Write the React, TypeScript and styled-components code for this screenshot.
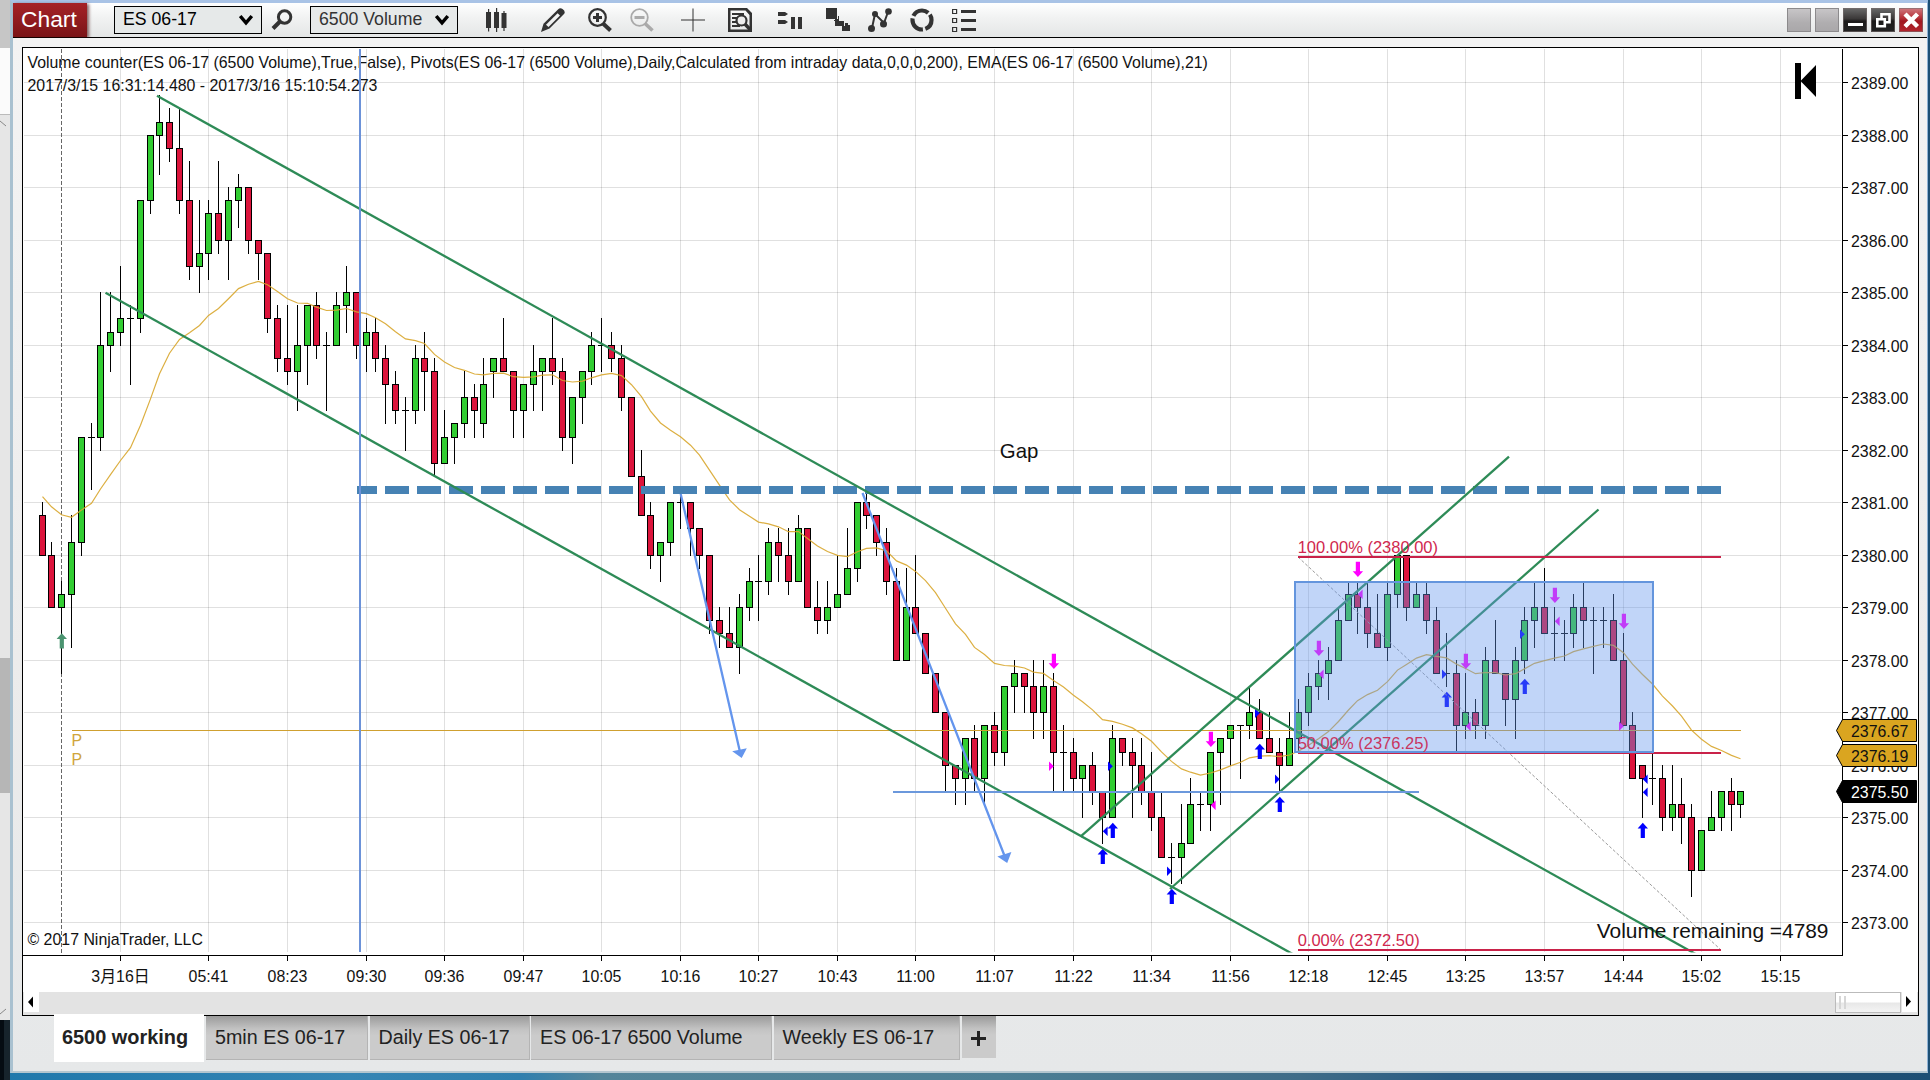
import { FunctionComponent, ReactNode } from "react";
import styled, { createGlobalStyle } from "styled-components";

const GlobalStyle = createGlobalStyle`
  * {
    box-sizing: border-box;
  }
  body {
    margin: 0;
    overflow: hidden;
    font-family: "Liberation Sans", Arial, "Noto Sans CJK SC", sans-serif;
  }
`;

type Candle = [string, number, number, number, number];

// [kind, body top, body bottom, high, low], in quarter points below 2389.00
const candles: Candle[] = [
  ["r", 33, 36, 32, 36], ["r", 36, 40, 35, 40], ["g", 39, 40, 38, 45], ["g", 35, 39, 33, 43],
  ["g", 27, 35, 27, 36], ["d", 27, 27, 26, 31], ["g", 20, 27, 16, 28], ["g", 19, 20, 16, 22],
  ["g", 18, 19, 14, 20], ["d", 18, 18, 17, 23], ["g", 9, 18, 9, 19], ["g", 4, 9, 4, 10],
  ["g", 3, 4, 1, 7], ["r", 3, 5, 2, 6], ["r", 5, 9, 2, 10], ["r", 9, 14, 6, 15],
  ["g", 13, 14, 9, 16], ["g", 10, 13, 9, 15], ["r", 10, 12, 6, 13], ["g", 9, 12, 8, 15],
  ["g", 8, 9, 7, 11], ["r", 8, 12, 8, 13], ["r", 12, 13, 12, 15], ["r", 13, 18, 13, 19],
  ["r", 18, 21, 17, 22], ["r", 21, 22, 17, 23], ["g", 20, 22, 17, 25], ["g", 17, 20, 17, 23],
  ["r", 17, 20, 16, 21], ["d", 20, 20, 19, 25], ["g", 17, 20, 16, 20], ["g", 16, 17, 14, 19],
  ["r", 16, 20, 16, 21], ["g", 19, 20, 18, 22], ["r", 19, 21, 18, 22], ["r", 21, 23, 20, 26],
  ["r", 23, 25, 22, 26], ["d", 25, 25, 24, 28], ["g", 21, 25, 20, 26], ["r", 21, 22, 19, 25],
  ["r", 22, 29, 21, 30], ["g", 27, 29, 25, 29], ["g", 26, 27, 26, 29], ["g", 24, 26, 22, 27],
  ["r", 24, 25, 23, 27], ["g", 23, 26, 21, 27], ["g", 21, 22, 21, 24], ["r", 21, 22, 18, 22],
  ["r", 22, 25, 22, 27], ["g", 23, 25, 23, 27], ["g", 22, 23, 20, 25], ["g", 21, 22, 21, 25],
  ["r", 21, 22, 18, 23], ["r", 22, 27, 21, 28], ["g", 24, 27, 24, 29], ["g", 22, 24, 22, 26],
  ["g", 20, 22, 19, 23], ["d", 20, 20, 18, 22], ["r", 20, 21, 19, 22], ["r", 21, 24, 20, 25],
  ["r", 24, 30, 24, 30], ["r", 30, 33, 28, 33], ["r", 33, 36, 32, 37], ["g", 35, 36, 35, 38],
  ["g", 32, 35, 32, 36], ["d", 32, 32, 31, 34], ["r", 32, 34, 32, 36], ["r", 34, 36, 34, 37],
  ["r", 36, 41, 36, 42], ["r", 41, 42, 40, 43], ["r", 42, 43, 40, 43], ["g", 40, 43, 39, 45],
  ["g", 38, 40, 37, 41], ["d", 38, 38, 36, 41], ["g", 35, 38, 34, 39], ["r", 35, 36, 34, 38],
  ["r", 36, 38, 34, 39], ["g", 34, 38, 33, 38], ["r", 34, 40, 34, 40], ["r", 40, 41, 38, 42],
  ["g", 40, 41, 38, 42], ["g", 39, 40, 36, 40], ["g", 37, 39, 34, 39], ["g", 32, 37, 32, 38],
  ["r", 32, 33, 31, 34], ["r", 33, 35, 33, 36], ["r", 35, 38, 34, 39], ["r", 38, 44, 37, 44],
  ["g", 40, 44, 37, 44], ["r", 40, 42, 36, 42], ["r", 42, 45, 42, 45], ["r", 45, 48, 45, 48],
  ["r", 48, 52, 48, 54], ["r", 52, 53, 52, 55], ["g", 50, 53, 50, 55], ["r", 50, 53, 49, 54],
  ["g", 49, 53, 49, 55], ["r", 49, 51, 48, 52], ["g", 46, 51, 46, 52], ["g", 45, 46, 44, 48],
  ["r", 45, 46, 45, 48], ["r", 46, 48, 44, 50], ["g", 46, 48, 44, 50], ["r", 46, 51, 45, 54],
  ["d", 51, 51, 49, 54], ["r", 51, 53, 50, 54], ["g", 52, 53, 52, 56], ["r", 52, 54, 51, 55],
  ["r", 54, 56, 54, 58], ["g", 50, 56, 49, 56], ["r", 50, 51, 50, 52], ["r", 51, 52, 50, 56],
  ["r", 52, 54, 50, 55], ["r", 54, 56, 51, 57], ["r", 56, 59, 54, 59], ["d", 59, 59, 58, 61],
  ["g", 58, 59, 55, 61], ["g", 55, 58, 53, 58], ["d", 55, 55, 54, 57], ["g", 51, 55, 51, 57],
  ["g", 50, 51, 50, 55], ["g", 49, 50, 49, 52], ["d", 49, 49, 49, 53], ["g", 48, 49, 46, 50],
  ["r", 48, 50, 47, 50], ["r", 50, 51, 48, 51], ["r", 51, 52, 50, 54], ["g", 50, 52, 48, 52],
  ["g", 48, 50, 47, 51], ["g", 46, 48, 45, 49], ["g", 45, 46, 44, 47], ["g", 44, 45, 43, 47],
  ["g", 41, 44, 40, 44], ["g", 39, 41, 38, 41], ["r", 39, 40, 38, 42], ["r", 40, 42, 38, 43],
  ["r", 42, 43, 39, 43], ["g", 39, 43, 38, 44], ["g", 36, 39, 36, 40], ["r", 36, 40, 36, 41],
  ["g", 39, 40, 38, 40], ["r", 39, 41, 38, 42], ["r", 41, 45, 40, 45], ["d", 45, 45, 42, 46],
  ["r", 45, 49, 44, 51], ["g", 48, 49, 45, 50], ["r", 48, 49, 47, 50], ["g", 44, 49, 43, 50],
  ["r", 44, 45, 41, 45], ["r", 45, 47, 45, 49], ["g", 44, 47, 43, 50], ["g", 41, 44, 40, 45],
  ["g", 40, 41, 38, 43], ["r", 40, 42, 37, 42], ["d", 42, 42, 40, 44], ["d", 42, 42, 41, 44],
  ["g", 40, 42, 39, 43], ["r", 40, 41, 38, 43], ["d", 41, 41, 40, 45], ["d", 41, 41, 40, 43],
  ["r", 41, 44, 39, 44], ["r", 44, 49, 42, 49], ["r", 49, 53, 48, 53], ["r", 52, 53, 52, 56],
  ["d", 53, 53, 51, 55], ["r", 53, 56, 52, 57], ["g", 55, 56, 52, 57], ["r", 55, 56, 53, 58],
  ["r", 56, 60, 55, 62], ["g", 57, 60, 57, 60], ["g", 56, 57, 54, 57], ["g", 54, 56, 54, 57],
  ["r", 54, 55, 53, 57], ["g", 54, 55, 54, 56],
];

const timeLabels: [number, string][] = [
  [8, "3月16日"], [17, "05:41"], [25, "08:23"], [33, "09:30"], [41, "09:36"], [49, "09:47"],
  [57, "10:05"], [65, "10:16"], [73, "10:27"], [81, "10:43"], [89, "11:00"], [97, "11:07"],
  [105, "11:22"], [113, "11:34"], [121, "11:56"], [129, "12:18"], [137, "12:45"], [145, "13:25"],
  [153, "13:57"], [161, "14:44"], [169, "15:02"], [177, "15:15"],
];

const buyArrows: [number, number][] = [
  [108, 849], [109, 823], [115, 889], [124, 744], [126, 797], [143, 692], [151, 679], [163, 823],
];
const sellArrows: [number, number][] = [
  [103, 654], [119, 732], [130, 641], [134, 562], [145, 654], [154, 588], [161, 614],
];
const fills: [number, number, "left" | "right", string][] = [
  [103, 766, "right", "#f0f"], [109, 766, "right", "#00f"], [108, 831, "left", "#00f"],
  [115, 871, "right", "#00f"], [119, 805, "left", "#f0f"], [124, 713, "right", "#00f"],
  [126, 779, "right", "#00f"], [130, 674, "left", "#f0f"], [134, 594, "left", "#f0f"],
  [143, 674, "right", "#00f"], [145, 726, "left", "#f0f"], [151, 634, "right", "#00f"],
  [154, 621, "left", "#f0f"], [161, 726, "right", "#f0f"], [163, 779, "left", "#00f"],
  [163, 792, "left", "#00f"],
];

const xAt = (i: number) => Math.floor(42 + 9.82 * i);
const yAt = (t: number) => Math.floor(82.7 + 13.125 * t);

const emaPoints = () => {
  let value = 496.7;
  return candles
    .map(([kind, top, bottom], i) => {
      const close = 82.7 + 13.125 * (kind === "g" ? top : bottom);
      if (i > 0) {
        value += (close - value) / 11;
      }
      return `${xAt(i) + 0.5},${value.toFixed(1)}`;
    })
    .join(" ");
};

const CandleBars = () => (
  <g shapeRendering="crispEdges">
    {candles.map(([kind, top, bottom, high, low], i) => {
      const x = xAt(i);
      const y = yAt(top);
      return (
        <g key={i}>
          <rect x={x} y={yAt(high)} width={1} height={yAt(low) - yAt(high) + 1} />
          {kind === "d" ? (
            <rect x={x - 3} y={y} width={7} height={1} />
          ) : (
            <rect
              x={x - 2.5}
              y={y + 0.5}
              width={6}
              height={yAt(bottom) - y}
              fill={kind === "g" ? "#32cd32" : "#dc143c"}
              stroke="#000"
            />
          )}
        </g>
      );
    })}
  </g>
);

const UpArrow = ({ x, y, color }: { x: number; y: number; color: string }) => (
  <path d={`M${x + 0.8} ${y - 0.3}l5.2 5.8h-3.100v9.500h-4.200v-9.500h-3.100z`} fill={color} />
);

const DownArrow = ({ x, y }: { x: number; y: number }) => (
  <path d={`M${x - 1.2} ${y - 0.2}h4.200v9.500h3.100l-5.200 5.800l-5.200 -5.800h3.100z`} fill="#f0f" />
);

const PriceTag = ({ y, label, dark }: { y: number; label: string; dark?: boolean }) => (
  <g>
    <path
      d={`M1836.5 ${y + 11.5}L1842.5 ${y + 0.5}H1916.5V${y + 22.5}H1842.5Z`}
      fill={dark ? "#000" : "#daa520"}
      stroke="#000"
    />
    <ChartText x={1851} y={y + 17.7} $color={dark ? "#fff" : "#111"}>
      {label}
    </ChartText>
  </g>
);

const ChartCanvas = () => (
  <Canvas viewBox="23 48 1895 944" width={1895} height={944}>
    <clipPath id="plot">
      <rect x={23} y={48} width={1819} height={904.5} />
    </clipPath>

    <g shapeRendering="crispEdges" fill="#000" fillOpacity={0.12}>
      {timeLabels.map(([i]) => (
        <rect key={i} x={xAt(i)} y={49} width={1} height={903} />
      ))}
      {Array.from({ length: 17 }, (_, n) => (
        <rect key={n} x={24} y={yAt(n * 4)} width={1817} height={1} />
      ))}
    </g>
    <path d="M61.5 49V953" stroke="#666" strokeDasharray="4 2" />

    <CandleBars />
    <polyline points={emaPoints()} fill="none" stroke="#d8a62c" strokeWidth={1.2} strokeOpacity={0.9} />
    <path d="M72 730.5H1741" stroke="#cfa030" />
    <ChartText x={71.5} y={745.7} $color="#cfa53c">P</ChartText>
    <ChartText x={71.5} y={765} $color="#cfa53c">P</ChartText>

    <UpArrow x={61} y={633.5} color="#4b9470" />
    {buyArrows.map(([i, y]) => <UpArrow key={i} x={xAt(i)} y={y} color="#00f" />)}
    {sellArrows.map(([i, y]) => <DownArrow key={i} x={xAt(i)} y={y} />)}
    {fills.map(([i, y, side, color], n) => (
      <path
        key={n}
        d={side === "right" ? `M${xAt(i) - 4} ${y - 4.5}l4.8 4.7l-4.8 4.7z` : `M${xAt(i) + 5.6} ${y - 4.5}l-4.8 4.7l4.8 4.7z`}
        fill={color}
      />
    ))}

    <ChartText x={27.5} y={67.7} $size={15.86}>
      Volume counter(ES 06-17 (6500 Volume),True,False), Pivots(ES 06-17 (6500 Volume),Daily,Calculated from intraday data,0,0,0,200), EMA(ES 06-17 (6500 Volume),21)
    </ChartText>
    <ChartText x={27.5} y={90.7}>2017/3/15 16:31:14.480 - 2017/3/16 15:10:54.273</ChartText>
    <ChartText x={27.5} y={944.7}>© 2017 NinjaTrader, LLC</ChartText>

    <path d="M357 490H1721" stroke="#4682b4" strokeWidth={8} strokeDasharray="24 8" strokeDashoffset={4} />

    <g clipPath="url(#plot)" stroke="#2e8b57" strokeWidth={2.3}>
      <path d="M157 95.7L1697 954.8" />
      <path d="M105.5 292.7L1294 954.8" />
      <path d="M1080.5 836.7L1509 456.7" />
      <path d="M1170 889L1598.5 509.5" />
    </g>
    <path d="M360 49V952" stroke="#6c92d8" strokeWidth={2} />
    <path d="M893 792H1419" stroke="#6b98dc" strokeWidth={2} />

    <g fill="#6495ed" stroke="#6495ed">
      <path d="M680.7 494L740 752M862.5 493L1005 857" strokeWidth={2.3} />
      <path d="M732.2 751.3L746.8 748.2L741.7 758Z" stroke="none" />
      <path d="M997.4 856.6L1011.4 852L1007.2 863Z" stroke="none" />
    </g>

    <path d="M1298 557L1721 950" stroke="#999" strokeWidth={1} strokeDasharray="3 2" />
    <g stroke="#c92249" strokeWidth={2}>
      <path d="M1298 557H1721M1298 753H1721M1298 950H1721" />
    </g>
    <rect x={1295} y={582} width={358} height={170} fill="#6495ed" fillOpacity={0.4} stroke="#6495dd" strokeWidth={2} />
    <ChartText x={1297.7} y={553} $size={16.5} $color="#d0284e">100.00% (2380.00)</ChartText>
    <ChartText x={1297.7} y={749} $size={16.5} $color="#c83561">50.00% (2376.25)</ChartText>
    <ChartText x={1297.7} y={945.5} $size={16.5} $color="#d0284e">0.00% (2372.50)</ChartText>

    <ChartText x={999.8} y={457.5} $size={20.4}>Gap</ChartText>
    <ChartText x={1596.8} y={937.5} $size={20.9}>Volume remaining =4789</ChartText>
    <path d="M1795 63h6v17.5l15-15.5v32l-15-15.5V99h-6z" />

    <g shapeRendering="crispEdges">
      <rect x={23} y={955} width={1820} height={1} />
      <rect x={1842} y={49} width={1} height={907} />
      {timeLabels.map(([i]) => (
        <rect key={i} x={xAt(i)} y={956} width={1} height={5} />
      ))}
      {Array.from({ length: 17 }, (_, n) => (
        <rect key={n} x={1843} y={yAt(n * 4)} width={5} height={1} />
      ))}
    </g>
    {timeLabels.map(([i, label]) => (
      <ChartText key={i} x={xAt(i) + 0.5} y={982} textAnchor="middle">{label}</ChartText>
    ))}
    {Array.from({ length: 17 }, (_, n) => (
      <ChartText key={n} x={1851} y={yAt(n * 4) + 6.7}>{`${2389 - n}.00`}</ChartText>
    ))}
    <PriceTag y={719} label="2376.67" />
    <PriceTag y={744} label="2376.19" />
    <PriceTag y={780} label="2375.50" dark />
  </Canvas>
);

const Chevron = () => (
  <svg width="14" height="12" viewBox="0 0 14 12">
    <path d="M1.2 2L7 8.8L12.8 2" fill="none" stroke="#000" strokeWidth="3.4" />
  </svg>
);

interface ToolProps {
  gap?: number;
  color?: string;
  children: ReactNode;
}

const Tool: FunctionComponent<ToolProps> = ({ gap = 18, color = "#333", children }) => (
  <ToolButton $gap={gap}>
    <svg width="24" height="24" viewBox="0 0 24 24" fill={color} stroke="none">
      {children}
    </svg>
  </ToolButton>
);

const Toolbar = () => (
  <ToolbarRow>
    <WindowTitle>Chart</WindowTitle>
    <SelectBox $gap={27}>
      ES 06-17
      <Chevron />
    </SelectBox>
    <SearchIcon width="22" height="22" viewBox="0 0 22 22">
      <circle cx="13.6" cy="8" r="6.2" fill="none" stroke="#333" strokeWidth="3" />
      <path d="M9 12.5L2 19.5" stroke="#333" strokeWidth="4" />
    </SearchIcon>
    <SelectBox $gap={17} $muted>
      6500 Volume
      <Chevron />
    </SelectBox>
    <Tool gap={26}>
      <path d="M2 4h5v16H2zM10 4h5v16h-5zM17.500 5h5v15h-5zM4 1h1.200v22.500H4zM12 0h1.200v24H12zM19.400 3h1.200v20h-1.200z" />
    </Tool>
    <Tool gap={33}>
      <path fillRule="evenodd" d="M17 1.500Q19 -.5 21.500 1Q25 3.500 23 6L8.500 20.500L0 24L2.500 15.800zM5 16.800L7.500 19L19 7.600L16.600 5.200z" />
    </Tool>
    <Tool gap={23}>
      <circle cx="9.500" cy="9.500" r="8.300" fill="none" stroke="#333" strokeWidth="2.200" />
      <path d="M8 5h3v3h3v3h-3v3H8v-3H5V8h3z" />
      <path d="M15 15.500L22.500 22.500" stroke="#333" strokeWidth="4" />
    </Tool>
    <Tool color="#aaa">
      <circle cx="9.500" cy="9.500" r="8.300" fill="none" stroke="#aaa" strokeWidth="1.800" />
      <path d="M4.500 8h10v3h-10z" />
      <path d="M15 15.500L22.500 22.500" stroke="#aaa" strokeWidth="3.600" />
    </Tool>
    <Tool gap={27}>
      <path d="M11.500 0.500h1v23h-1zM0 11.500h24v1H0z" />
    </Tool>
    <Tool gap={23}>
      <path fillRule="evenodd" d="M0 0h19l5 5v19H0zM2.500 2.500v19h19V7l-4-4.500z" />
      <path d="M4 5h12v2H4zM4 9h6v2H4zM4 13h4v2H4zM4 17h8v2H4z" />
      <circle cx="13.500" cy="12.500" r="5" fill="#eee" stroke="#333" strokeWidth="2.200" />
      <path d="M17 16L23 22.500" stroke="#333" strokeWidth="3.500" />
    </Tool>
    <Tool gap={26}>
      <path d="M0 4h7l3 2l-3 2H0zM0 12h7l3 2l-3 2H0zM13 9h4v12h-4zM20 9h4v12h-4z" />
    </Tool>
    <Tool gap={24}>
      <path d="M0 0h11v11H0zM13 8v5h5v5H9v-5h-1v-1h1V11h3V8zM20 15h-1v3h-3v5h8v-6h-2v-2z" />
    </Tool>
    <Tool>
      <path d="M4 20L7 6L16 15L20 4" fill="none" stroke="#333" strokeWidth="2" />
      <circle cx="3.500" cy="20.500" r="3.500" />
      <circle cx="7" cy="6" r="3" />
      <circle cx="15.500" cy="16" r="3.500" />
      <circle cx="20.500" cy="3.500" r="3.300" />
    </Tool>
    <Tool>
      <circle cx="12" cy="12" r="9.500" fill="none" stroke="#333" strokeWidth="4.200" strokeDasharray="17.400 2.500" strokeDashoffset="6" />
    </Tool>
    <Tool>
      <path d="M9 2h15v3H9zM9 11h15v3H9zM9 20h15v3H9z" />
      <path d="M.6 1.500h4v4h-4zM.6 10.500h4v4h-4zM.6 19.500h4v4h-4z" fill="none" stroke="#333" strokeWidth="1.200" />
    </Tool>
    <WindowButtons>
      <WindowButton $tone="grey" />
      <WindowButton $tone="grey" />
      <WindowButton $tone="dark">
        <svg width="24" height="24"><path d="M5 15h15v3H5z" fill="#fff" /></svg>
      </WindowButton>
      <WindowButton $tone="dark">
        <svg width="24" height="24" fill="none" stroke="#fff" strokeWidth="2.600">
          <path d="M10.500 10V6.300h8v8H15" />
          <path d="M6.300 11.300h7.500v7H6.300z" />
        </svg>
      </WindowButton>
      <WindowButton $tone="red">
        <svg width="24" height="24"><path d="M6 6L18.500 18.500M18.500 6L6 18.500" stroke="#fff" strokeWidth="4.400" /></svg>
      </WindowButton>
    </WindowButtons>
  </ToolbarRow>
);

const tabs = [
  { label: "5min ES 06-17", width: 162 },
  { label: "Daily ES 06-17", width: 160 },
  { label: "ES 06-17 6500 Volume", width: 241 },
  { label: "Weekly ES 06-17", width: 186 },
];

const App = () => (
  <>
    <GlobalStyle />
    <Desktop>
      <BackWindow>
        <BackTitle />
        <BackHead />
        <BackBody>
          <BackCaret>
            <svg width="7" height="7"><path d="M0 1L6 6" fill="none" stroke="#888" /></svg>
          </BackCaret>
          <BackThumb />
          <BackCaret>
            <svg width="7" height="7"><path d="M0 6L6 1" fill="none" stroke="#888" /></svg>
          </BackCaret>
        </BackBody>
        <BackFoot />
      </BackWindow>
      <ChartWindow>
        <Toolbar />
        <WindowBody>
          <ChartFrame>
            <ChartCanvas />
            <ScrollBar>
              <ScrollArrow>
                <svg width="15" height="20"><path d="M4 10l5-5.500v11z" /></svg>
              </ScrollArrow>
              <ScrollThumb>
                <Grip />
                <Grip />
              </ScrollThumb>
              <ScrollArrow>
                <svg width="15" height="20"><path d="M9 9.500l-5-5.500v11z" /></svg>
              </ScrollArrow>
            </ScrollBar>
          </ChartFrame>
          <TabBar>
            <ActiveTab>6500 working</ActiveTab>
            {tabs.map((tab) => (
              <Tab key={tab.label} $width={tab.width}>{tab.label}</Tab>
            ))}
            <AddTab>
              <svg width="15" height="15"><path d="M0 6h6V0h3v6h6v3H9v6H6V9H0z" fill="#222" /></svg>
            </AddTab>
          </TabBar>
        </WindowBody>
      </ChartWindow>
    </Desktop>
  </>
);

export default App;

const Desktop = styled.div`
  display: flex;
  width: 1930px;
  height: 1080px;
  overflow: hidden;
  background: linear-gradient(90deg, #1f78ab 0, #3585b4 350px, #2f7fae 520px, #54859a 600px, #4d7f95 1000px, #3f6c88 1300px, #2a5c83 1450px, #1d4f74 1930px);
`;

const BackWindow = styled.div`
  display: flex;
  flex-direction: column;
  width: 10px;
  height: 1080px;
`;

const BackTitle = styled.div`
  height: 48px;
  background: #c6c6c6;
`;

const BackHead = styled.div`
  height: 67px;
  background: #fbfbfb;
  border-bottom: 1px solid #bbb;
`;

const BackBody = styled.div`
  display: flex;
  flex-direction: column;
  justify-content: space-between;
  height: 905px;
  background: #e6e6e6;
`;

const BackCaret = styled.div`
  height: 17px;
  padding-top: 5px;
  line-height: 0;
`;

const BackThumb = styled.div`
  height: 135px;
  margin-top: 315px;
  background: #b6b6b6;
`;

const BackFoot = styled.div`
  flex: 1;
  background: #050c12;
  border-right: 6px solid #17242c;
`;

const ChartWindow = styled.div`
  display: flex;
  flex-direction: column;
  width: 1918px;
  height: 1073px;
  border-top: 3px solid #a9c3e6;
  border-left: 3px solid #a9c1d0;
  border-right: 1px solid #8fb3d6;
  border-bottom: 2px solid #b4c6cf;
  background: #e6e8e9;
`;

const ToolbarRow = styled.div`
  display: flex;
  align-items: center;
  height: 35px;
  flex: none;
  padding-right: 4px;
  border-bottom: 1px solid #000;
  background: linear-gradient(#fff, #f2f3f3 40%, #e4e6e6);
`;

const WindowTitle = styled.div`
  align-self: stretch;
  width: 74px;
  padding-left: 8px;
  font-size: 22.800px;
  line-height: 33px;
  color: #fff;
  background: linear-gradient(#a52226, #8c1a1e 60%, #7a1417);
  box-shadow: 2px 1px 3px rgba(60, 0, 0, 0.6);
`;

const SelectBox = styled.div<{ $gap: number; $muted?: boolean }>`
  display: flex;
  align-items: center;
  justify-content: space-between;
  width: 148px;
  height: 28px;
  margin-left: ${(props) => props.$gap}px;
  padding: 0 8px 1px;
  border: 1px solid #000;
  background: #e6e9e9;
  font-size: 17.700px;
  color: ${(props) => (props.$muted ? "#333" : "#000")};
`;

const SearchIcon = styled.svg`
  margin-left: 9px;
`;

const ToolButton = styled.div<{ $gap: number }>`
  width: 24px;
  height: 24px;
  margin-left: ${(props) => props.$gap}px;
`;

const WindowButtons = styled.div`
  display: flex;
  gap: 4px;
  margin-left: auto;
`;

const tones = {
  grey: "linear-gradient(#c9c7c9, #b0aeb0 60%, #a9a7a9)",
  dark: "linear-gradient(#6a6a6a, #3a3838 45%, #1c1a1a 55%, #222)",
  red: "linear-gradient(#cf7a80, #b8323a 40%, #a01820 55%, #b3262e)",
};

const WindowButton = styled.div<{ $tone: "grey" | "dark" | "red" }>`
  width: 24px;
  height: 24px;
  background: ${(props) => tones[props.$tone]};
  box-shadow: inset 0 0 0 1px ${(props) => (props.$tone === "grey" ? "#8c8a8c" : "rgba(120, 110, 110, 0.6)")};
`;

const WindowBody = styled.div`
  display: flex;
  flex-direction: column;
  flex: 1;
  padding: 9px 8px 0 9px;
  background: linear-gradient(#f3f3f3, #ececec 60%, #e6e8e9);
`;

const ChartFrame = styled.div`
  width: 1897px;
  height: 969px;
  flex: none;
  border: 1px solid #000;
  background: #fff;
`;

const Canvas = styled.svg`
  display: block;
`;

const ChartText = styled.text<{ $size?: number; $color?: string }>`
  font-size: ${(props) => props.$size ?? 15.9}px;
  fill: ${(props) => props.$color ?? "#111"};
`;

const ScrollBar = styled.div`
  display: flex;
  align-items: flex-start;
  height: 23px;
  padding: 0 1px;
  background: #e3e3e3;
`;

const ScrollArrow = styled.div`
  width: 15px;
  height: 20px;
  background: #fff;
`;

const ScrollThumb = styled.div`
  display: flex;
  gap: 3px;
  width: 66px;
  height: 21px;
  margin-left: auto;
  margin-right: 1px;
  padding: 3px;
  border: 1px solid #bbb;
  background: linear-gradient(#fff 45%, #e8e8e8 55%, #f4f4f4);
`;

const Grip = styled.div`
  width: 2px;
  height: 13px;
  background: #d6d6d6;
`;

const TabBar = styled.div`
  display: flex;
  align-items: flex-start;
  padding-left: 32px;
  font-size: 19.700px;
  color: #222;
`;

const ActiveTab = styled.div`
  position: relative;
  width: 150px;
  height: 48px;
  margin-top: -2px;
  margin-right: 2px;
  padding-left: 8px;
  font-size: 19.900px;
  line-height: 46px;
  white-space: nowrap;
  font-weight: bold;
  background: #fff;
`;

const Tab = styled.div<{ $width: number }>`
  width: ${(props) => props.$width}px;
  height: 44px;
  margin-right: 1.500px;
  padding-left: 9px;
  line-height: 42px;
  white-space: nowrap;
  border-right: 1px solid #b4b4b4;
  border-bottom: 1px solid #b4b4b4;
  background: linear-gradient(#9b9b9b, #c2c2c2 30%, #cbcbcb 45%);
`;

const AddTab = styled.div`
  width: 34px;
  height: 42px;
  margin-left: 1px;
  padding: 12px 0 0 9px;
  background: linear-gradient(#9b9b9b, #c2c2c2 30%, #cbcbcb 45%);
`;
